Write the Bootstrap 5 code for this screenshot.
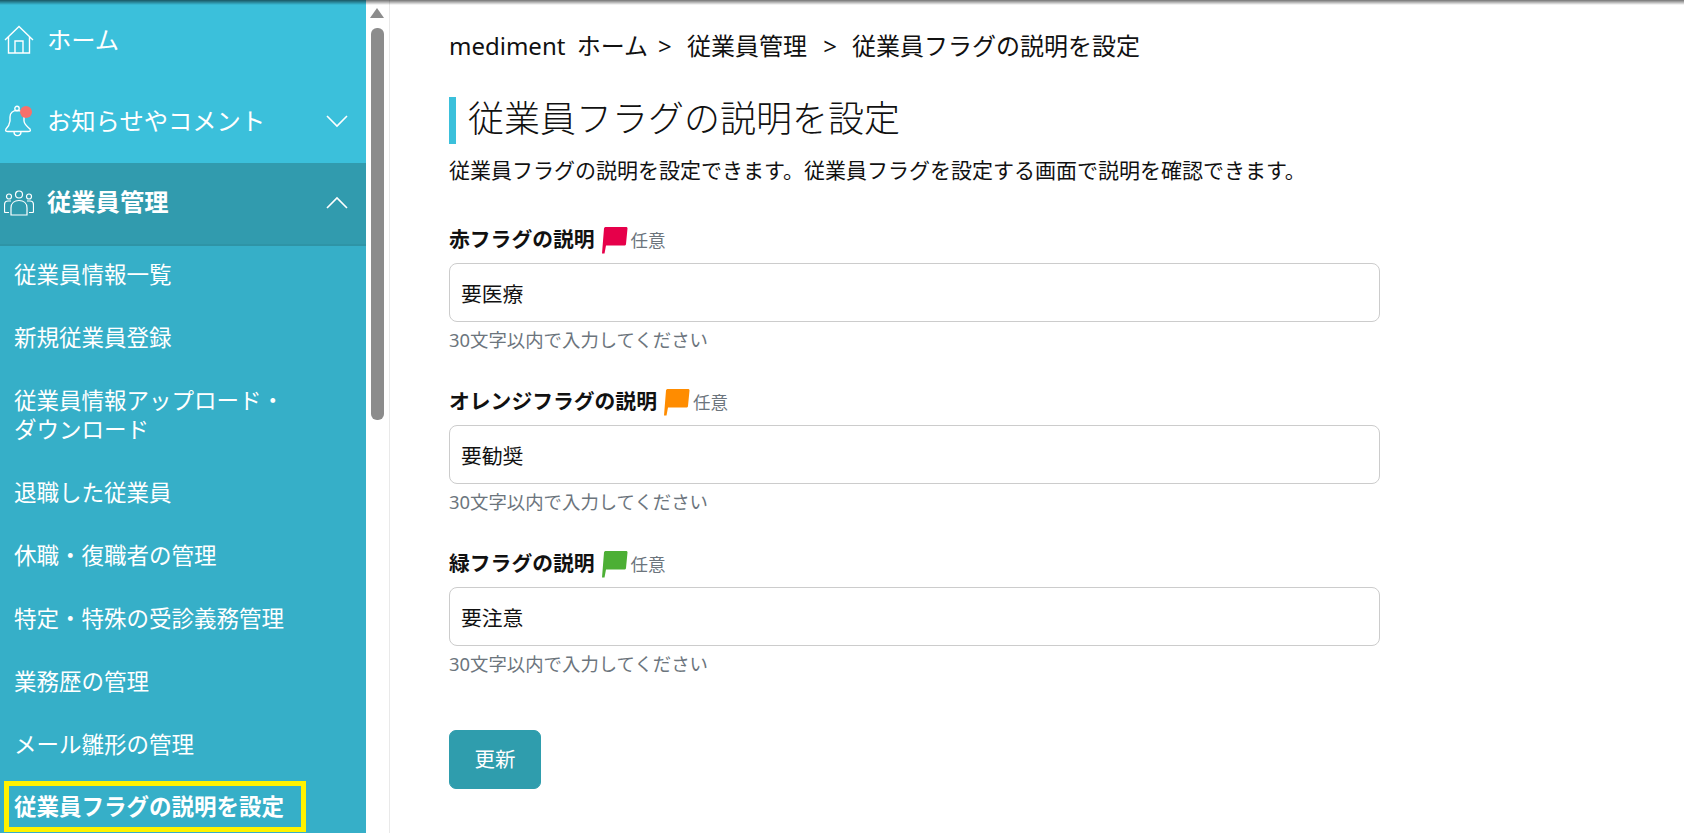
<!DOCTYPE html>
<html lang="ja">

<head>
    <meta charset="UTF-8">
    <meta name="viewport" content="width=device-width, initial-scale=1.0">
    <title>従業員フラグの説明を設定</title>
    <link href="https://cdn.jsdelivr.net/npm/bootstrap@5.3.3/dist/css/bootstrap.min.css" rel="stylesheet">
    <style>
        body {
            font-family: "Noto Sans", "Noto Sans CJK JP", sans-serif;
            color: #111;
            background: #fff;
        }

        .top-shade {
            position: fixed;
            top: 0;
            left: 0;
            right: 0;
            height: 5px;
            background: linear-gradient(rgba(0, 0, 0, 0.55), rgba(0, 0, 0, 0));
            z-index: 5;
        }

        .side-menu {
            width: 366px;
            background: #36afc8;
            color: #fff;
        }

        .side-top {
            height: 81.500px;
            padding-bottom: 2px;
            background: #3bc0db;
            font-size: 24.300px;
        }

        .side-top.is-open {
            height: 83px;
            background: #319bae;
            border-bottom: 2px solid #2e94a6;
            font-weight: 700;
        }

        .side-icon {
            width: 47px;
        }

        .side-chevron {
            margin-right: 18px;
        }

        .side-sub {
            padding: 14px 14px 20px;
            font-size: 22.500px;
            line-height: 29px;
        }

        .side-sub.is-current {
            padding-top: 2px;
            padding-bottom: 0;
            font-weight: 700;
        }

        .mark-box {
            display: inline-block;
            width: 302px;
            margin-left: -10px;
            padding: 6px 0 6px 5px;
            border: 5px solid #fff200;
        }

        .fake-scroll {
            width: 24px;
            background: #fff;
            border-right: 1px solid #e9e9e9;
        }

        .scroll-arrow {
            width: 0;
            height: 0;
            margin: 8px 0 0 4px;
            border-left: 7.500px solid transparent;
            border-right: 7.500px solid transparent;
            border-bottom: 10px solid #8c8c8c;
        }

        .scroll-thumb {
            width: 13px;
            height: 392px;
            margin: 10px 0 0 5px;
            background: #8c8c8c;
            border-radius: 6px;
        }

        .page-body {
            padding: 30px 0 0 59px;
        }

        .crumbs {
            font-size: 24px;
            line-height: 32px;
        }

        .crumbs .first-crumb {
            word-spacing: 5px;
        }

        .crumbs .sep {
            margin: 0 9px 0 10px;
        }

        .crumbs .sep + .sep-after {
            margin-left: -2px;
        }

        .page-title {
            margin: 35px 0 0;
            padding: 0 0 4px 12px;
            border-left: 7px solid #3bc0db;
            font-size: 36px;
            font-weight: 300;
            line-height: 43px;
        }

        .page-lead {
            margin: 11px 0 0;
            font-size: 21px;
            line-height: 30px;
        }

        .flag-form {
            width: 931px;
            margin-top: 38px;
        }

        .flag-field {
            height: 162px;
        }

        .flag-label {
            height: 40px;
            padding-bottom: 6px;
            font-size: 20.800px;
            font-weight: 700;
        }

        .flag-label svg {
            margin-left: 6px;
        }

        .opt-note {
            margin-left: 3px;
            font-size: 17.500px;
            font-weight: 400;
            color: #6c757d;
        }

        .flag-input {
            height: 59px;
            padding: 0 11px;
            border-color: #ccc;
            border-radius: 8px;
            font-size: 20.800px;
            color: #111;
        }

        .flag-help {
            margin-top: 4px;
            font-size: 18.400px;
            line-height: 28px;
            color: #6c757d;
        }

        .save-btn {
            width: 92px;
            height: 59px;
            margin-top: 21px;
            padding: 0;
            background: #2f9dad;
            border-color: #2f9dad;
            border-radius: 7px;
            color: #fff;
            font-size: 20.500px;
        }
    </style>
</head>

<body>
    <div class="top-shade"></div>
    <div class="d-flex vh-100 overflow-hidden">
        <!-- サイドメニュー -->
        <nav class="side-menu flex-shrink-0 overflow-hidden">
            <div class="side-top d-flex align-items-center">
                <span class="side-icon d-flex ps-0">
                    <svg class="ms-1" width="30" height="30" viewBox="0 0 30 30" fill="none" stroke="#fff" stroke-width="1.400"><path d="M1 15 15 1.500 29 15M4.500 12V28H25.500V12M11 28V16H19V28"/></svg>
                </span>
                <span>ホーム</span>
            </div>
            <div class="side-top d-flex align-items-center">
                <span class="side-icon d-flex ps-1 position-relative">
                    <svg width="30" height="32" viewBox="0 0 30 32" fill="none" stroke="#fff" stroke-width="1.400"><circle cx="13" cy="3.500" r="2.200"/><path d="M2 24C4 22 5.500 20 6 16V12C6 8 9 5.500 13 5.500S20 8 20 12V16C20.500 20 24 22 26 24 27 26 26 26.500 24 26.500H4C2 26.500 1 26 2 24ZM10 26.500C10 32 17 32 17 26.500"/><circle cx="22" cy="7" r="6" fill="#f7706b" stroke="none"/></svg>
                </span>
                <span class="flex-grow-1">お知らせやコメント</span>
                <svg class="side-chevron" width="22" height="14" viewBox="0 0 22 14" fill="none" stroke="#fff" stroke-width="1.600"><path d="M1 2 11 12 21 2"/></svg>
            </div>
            <div class="side-top is-open d-flex align-items-center">
                <span class="side-icon d-flex">
                    <svg class="ms-1" width="30" height="26" viewBox="0 0 30 26" fill="none" stroke="#fff" stroke-width="1.200"><circle cx="15" cy="4.500" r="3.500"/><circle cx="5" cy="6.500" r="2.500"/><circle cx="25" cy="6.500" r="2.500"/><path d="M7 25V18C7 13 10.500 10.500 15 10.500S23 13 23 18V25ZM5 22.500H1.500C.5 22.500.5 22 .5 21V15C.5 12.500 2 11 4 11H7M25 22.500H28.500C29.500 22.500 29.500 22 29.500 21V15C29.500 12.500 28 11 26 11H23"/></svg>
                </span>
                <span class="flex-grow-1">従業員管理</span>
                <svg class="side-chevron" width="22" height="14" viewBox="0 0 22 14" fill="none" stroke="#fff" stroke-width="1.600"><path d="M1 12 11 2 21 12"/></svg>
            </div>
            <div class="side-sub">従業員情報一覧</div>
            <div class="side-sub">新規従業員登録</div>
            <div class="side-sub">従業員情報アップロード・<br>ダウンロード</div>
            <div class="side-sub">退職した従業員</div>
            <div class="side-sub">休職・復職者の管理</div>
            <div class="side-sub">特定・特殊の受診義務管理</div>
            <div class="side-sub">業務歴の管理</div>
            <div class="side-sub">メール雛形の管理</div>
            <div class="side-sub is-current"><span class="mark-box">従業員フラグの説明を設定</span></div>
        </nav>
        <div class="fake-scroll flex-shrink-0">
            <div class="scroll-arrow"></div>
            <div class="scroll-thumb"></div>
        </div>

        <!-- 本文 -->
        <main class="page-body flex-grow-1">
            <div class="crumbs"><span class="first-crumb">mediment ホーム</span><span class="sep">&gt;</span> 従業員管理 <span class="sep">&gt;</span> 従業員フラグの説明を設定</div>
            <h1 class="page-title">従業員フラグの説明を設定</h1>
            <p class="page-lead">従業員フラグの説明を設定できます。従業員フラグを設定する画面で説明を確認できます。</p>

            <form class="flag-form">
                <div class="flag-field">
                    <label class="flag-label d-flex align-items-center">赤フラグの説明
                        <svg width="27" height="28" viewBox="0 0 27 28"><path d="M3 2.500C3 1.500 4 1 5 1H25C26 1 26.500 1.500 26.500 2.500L25 18C25 19 24 19.500 23 19.500H5L3.500 27.500 1 27.500Z" fill="#e6004a"/></svg>
                        <span class="opt-note">任意</span>
                    </label>
                    <input type="text" class="form-control flag-input" value="要医療">
                    <div class="flag-help">30文字以内で入力してください</div>
                </div>
                <div class="flag-field">
                    <label class="flag-label d-flex align-items-center">オレンジフラグの説明
                        <svg width="27" height="28" viewBox="0 0 27 28"><path d="M3 2.500C3 1.500 4 1 5 1H25C26 1 26.500 1.500 26.500 2.500L25 18C25 19 24 19.500 23 19.500H5L3.500 27.500 1 27.500Z" fill="#ff8c00"/></svg>
                        <span class="opt-note">任意</span>
                    </label>
                    <input type="text" class="form-control flag-input" value="要勧奨">
                    <div class="flag-help">30文字以内で入力してください</div>
                </div>
                <div class="flag-field">
                    <label class="flag-label d-flex align-items-center">緑フラグの説明
                        <svg width="27" height="28" viewBox="0 0 27 28"><path d="M3 2.500C3 1.500 4 1 5 1H25C26 1 26.500 1.500 26.500 2.500L25 18C25 19 24 19.500 23 19.500H5L3.500 27.500 1 27.500Z" fill="#4caf35"/></svg>
                        <span class="opt-note">任意</span>
                    </label>
                    <input type="text" class="form-control flag-input" value="要注意">
                    <div class="flag-help">30文字以内で入力してください</div>
                </div>
                <button type="button" class="btn save-btn">更新</button>
            </form>
        </main>
    </div>
    <script src="https://cdn.jsdelivr.net/npm/bootstrap@5.3.3/dist/js/bootstrap.bundle.min.js"></script>
</body>

</html>
